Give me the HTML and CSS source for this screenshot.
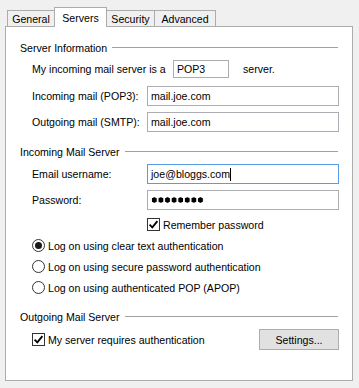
FILE: index.html
```html
<!DOCTYPE html>
<html lang="en">
<head>
  <meta charset="UTF-8" />
  <title>Account Properties - Servers</title>
  <link rel="stylesheet" href="styles.css">
</head>
<body>

  <div class="dialog">
    <div class="tabs">
      <div class="tab tab-general">General</div>
      <div class="tab tab-servers activa">Servers</div>
      <div class="tab tab-security">Security</div>
      <div class="tab tab-advanced">Advanced</div>
    </div>

    <div class="panel">
      <!-- Server Information -->
      <div class="group-title"><span>Server Information</span><i class="rule"></i></div>
      <div class="row row-pop">
        <span class="lead">My incoming mail server is a</span>
        <div class="field field-short">POP3</div>
        <span class="tail">server.</span>
      </div>
      <div class="row row-incoming">
        <span class="label">Incoming mail (POP3):</span>
        <div class="field">mail.joe.com</div>
      </div>
      <div class="row">
        <span class="label">Outgoing mail (SMTP):</span>
        <div class="field">mail.joe.com</div>
      </div>

      <!-- Incoming Mail Server -->
      <div class="group-title title-incoming"><span>Incoming Mail Server</span><i class="rule"></i></div>
      <div class="row row-email">
        <span class="label">Email username:</span>
        <div class="field focus"><span class="caret">joe@bloggs.com</span></div>
      </div>
      <div class="row">
        <span class="label">Password:</span>
        <div class="field"><span class="dots" aria-label="password"></span></div>
      </div>
      <div class="check-row remember">
        <span class="checkbox checked">
          <svg viewBox="0 0 11 11" width="11" height="11"><path d="M1.6 5.6 L4.3 8.3 L9.4 2.2" /></svg>
        </span>
        <span>Remember password</span>
      </div>
      <div class="check-row">
        <span class="radio selected"></span>
        <span>Log on using clear text authentication</span>
      </div>
      <div class="check-row">
        <span class="radio"></span>
        <span>Log on using secure password authentication</span>
      </div>
      <div class="check-row">
        <span class="radio"></span>
        <span>Log on using authenticated POP (APOP)</span>
      </div>

      <!-- Outgoing Mail Server -->
      <div class="group-title title-outgoing"><span>Outgoing Mail Server</span><i class="rule"></i></div>
      <div class="check-row auth">
        <span class="checkbox checked">
          <svg viewBox="0 0 11 11" width="11" height="11"><path d="M1.6 5.6 L4.3 8.3 L9.4 2.2" /></svg>
        </span>
        <span>My server requires authentication</span>
        <button class="btn-settings">Settings...</button>
      </div>
    </div>
  </div>

</body>
</html>
```

FILE: styles.css
```css
  /* Base */
  * {
    box-sizing: border-box;
  }

  body {
    margin: 0;
    background: #f0f0f0;
    font-family: "Liberation Sans", Arial, sans-serif;
    font-size: 10.6px;
    color: #000;
  }

  .dialog {
    padding-left: 5px;
    width: 353px;
  }

  /* Tabs */
  .tabs {
    display: flex;
    align-items: flex-end;
    height: 26px;
    padding: 7px 0 0 2px;
  }

  .tab {
    display: flex;
    align-items: center;
    justify-content: center;
    height: 16px;
    margin-left: -1px;
    border: 1px solid #acacac;
    border-bottom: 0;
    background: #f0f0f0;
    padding-top: 1px;
  }

  .tab-general { width: 48px; margin-left: 0; }
  .tab-servers { width: 53px; }
  .tab-security { width: 49px; }
  .tab-advanced { width: 62px; }

  .tab.activa {
    position: relative;
    z-index: 1;
    height: 20px;
    margin-bottom: -1px;
    background: #fff;
    padding-top: 0;
  }

  /* Panel */
  .panel {
    height: 355px;
    background: #fff;
    border: 1px solid #acacac;
    padding: 13px 13px 0 14px;
  }

  .group-title {
    display: flex;
    align-items: center;
    gap: 5px;
    height: 15px;
  }

  .rule {
    flex: 1;
    height: 1px;
    margin-right: 1px;
    background: #a0a0a0;
  }

  .title-incoming { margin-top: 12px; }
  .title-outgoing { margin-top: 11px; }

  /* Form rows */
  .row {
    display: flex;
    align-items: center;
    height: 20px;
    margin-top: 6px;
    padding-left: 12px;
  }

  .row-pop {
    height: 18px;
    margin-top: 5px;
  }

  .row-incoming { margin-top: 8px; }
  .row-email { margin-top: 5px; }

  .lead {
    width: 141px;
  }

  .label {
    width: 115px;
  }

  .field {
    flex: 1;
    display: flex;
    align-items: center;
    height: 20px;
    padding-left: 3px;
    border: 1px solid #abadb3;
    background: #fff;
  }

  .field-short {
    flex: none;
    width: 56px;
    height: 18px;
  }

  .tail {
    margin-left: 14px;
  }

  .field.focus {
    border-color: #569de5;
  }

  .caret {
    border-right: 1px solid #000;
    line-height: 13px;
  }

  .dots {
    display: block;
    width: 53px;
    height: 6px;
    background: radial-gradient(circle, #000 2.4px, transparent 2.9px) 0 0 / 6.6px 6px repeat-x;
  }

  /* Checkboxes and radios */
  .check-row {
    display: flex;
    align-items: center;
    gap: 3px;
    height: 21px;
    padding-left: 12px;
  }

  .remember {
    margin-top: 4px;
    padding-left: 127px;
  }

  .auth {
    margin-top: 5px;
  }

  .checkbox {
    display: flex;
    align-items: center;
    justify-content: center;
    width: 13px;
    height: 13px;
    border: 1px solid #333;
    background: #fff;
  }

  .checkbox svg path {
    fill: none;
    stroke: #000;
    stroke-width: 1.8;
  }

  .radio {
    display: flex;
    align-items: center;
    justify-content: center;
    width: 13px;
    height: 13px;
    border: 1px solid #333;
    border-radius: 50%;
    background: #fff;
  }

  .radio.selected::after {
    content: "";
    width: 7px;
    height: 7px;
    border-radius: 50%;
    background: #1a1a1a;
  }

  .btn-settings {
    margin-left: auto;
    width: 80px;
    height: 21px;
    padding: 0;
    border: 1px solid #adadad;
    background: #e1e1e1;
    font: inherit;
    color: #000;
  }
```
